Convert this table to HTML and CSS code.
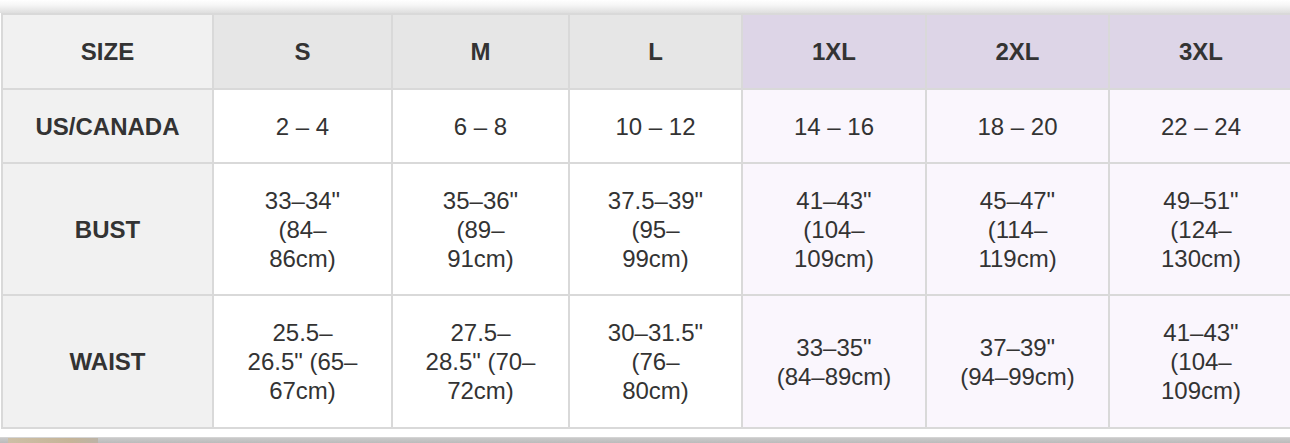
FILE: index.html
```html
<!DOCTYPE html>
<html lang="en">
<head>
<meta charset="utf-8">
<title>Size Chart</title>
<link rel="stylesheet" href="styles.css">
</head>
<body>
<div class="page">
  <div class="top-shade"></div>
  <table class="size-chart">
    <colgroup>
      <col class="c-label">
      <col class="c-s">
      <col class="c-m">
      <col class="c-l">
      <col class="c-1xl">
      <col class="c-2xl">
      <col class="c-3xl">
    </colgroup>
    <thead>
      <tr class="r-head">
        <th class="lbl">SIZE</th>
        <th class="std">S</th>
        <th class="std">M</th>
        <th class="std">L</th>
        <th class="plus">1XL</th>
        <th class="plus">2XL</th>
        <th class="plus">3XL</th>
      </tr>
    </thead>
    <tbody>
      <tr class="r-us">
        <th class="lbl">US/CANADA</th>
        <td>2 – 4</td>
        <td>6 – 8</td>
        <td>10 – 12</td>
        <td class="plus">14 – 16</td>
        <td class="plus">18 – 20</td>
        <td class="plus">22 – 24</td>
      </tr>
      <tr class="r-bust">
        <th class="lbl">BUST</th>
        <td>33–34"<br>(84–<br>86cm)</td>
        <td>35–36"<br>(89–<br>91cm)</td>
        <td>37.5–39"<br>(95–<br>99cm)</td>
        <td class="plus">41–43"<br>(104–<br>109cm)</td>
        <td class="plus">45–47"<br>(114–<br>119cm)</td>
        <td class="plus">49–51"<br>(124–<br>130cm)</td>
      </tr>
      <tr class="r-waist">
        <th class="lbl">WAIST</th>
        <td>25.5–<br>26.5" (65–<br>67cm)</td>
        <td>27.5–<br>28.5" (70–<br>72cm)</td>
        <td>30–31.5"<br>(76–<br>80cm)</td>
        <td class="plus">33–35"<br>(84–89cm)</td>
        <td class="plus">37–39"<br>(94–99cm)</td>
        <td class="plus">41–43"<br>(104–<br>109cm)</td>
      </tr>
    </tbody>
  </table>
  <div class="bottom-gap"></div>
  <div class="bottom-strip"><div class="photo-edge"></div></div>
</div>
</body>
</html>
```

FILE: styles.css
```css
html, body {
  margin: 0;
  padding: 0;
  background: #ffffff;
}

body {
  overflow: hidden;
  font-family: "Liberation Sans", Arial, Helvetica, sans-serif;
  color: #333333;
}

.page {
  width: 1290px;
  height: 443px;
  overflow: hidden;
}

.top-shade {
  height: 13px;
  background: linear-gradient(to bottom, #ffffff 0%, #f6f6f6 40%, #dedede 100%);
}

.size-chart {
  margin-left: 1px;
  border-collapse: collapse;
  table-layout: fixed;
  width: 1291px;
  border: 2px solid #d5d5d5;
  font-size: 24px;
  line-height: 29px;
}

.c-label { width: 211px; }
.c-s { width: 179px; }
.c-m { width: 177px; }
.c-l { width: 173px; }
.c-1xl { width: 184px; }
.c-2xl { width: 183px; }
.c-3xl { width: 184px; }

.size-chart th,
.size-chart td {
  border: 2px solid #d9d9d9;
  padding: 0 8px;
  text-align: center;
  vertical-align: middle;
  white-space: nowrap;
}

.size-chart th {
  font-weight: bold;
}

.size-chart td {
  font-weight: normal;
  background: #ffffff;
}

.r-head { height: 75px; }
.r-us { height: 74px; }
.r-bust { height: 132px; }
.r-waist { height: 133px; }

.size-chart .lbl {
  background: #f1f1f1;
}

.size-chart th.std {
  background: #e6e6e6;
}

.size-chart th.plus {
  background: #ddd5e7;
}

.size-chart td.plus {
  background: #faf6fd;
}

.bottom-gap {
  height: 8px;
}

.bottom-strip {
  height: 8px;
  border-top: 1px solid #d4d4d4;
  background: linear-gradient(to bottom, #c9c9c9 0%, #b3b3b3 100%);
  display: flex;
}

.photo-edge {
  width: 90px;
  margin-left: 8px;
  background: linear-gradient(to right, #cdbfa6 0%, #c5b498 70%, #bcb3a6 100%);
}
```
